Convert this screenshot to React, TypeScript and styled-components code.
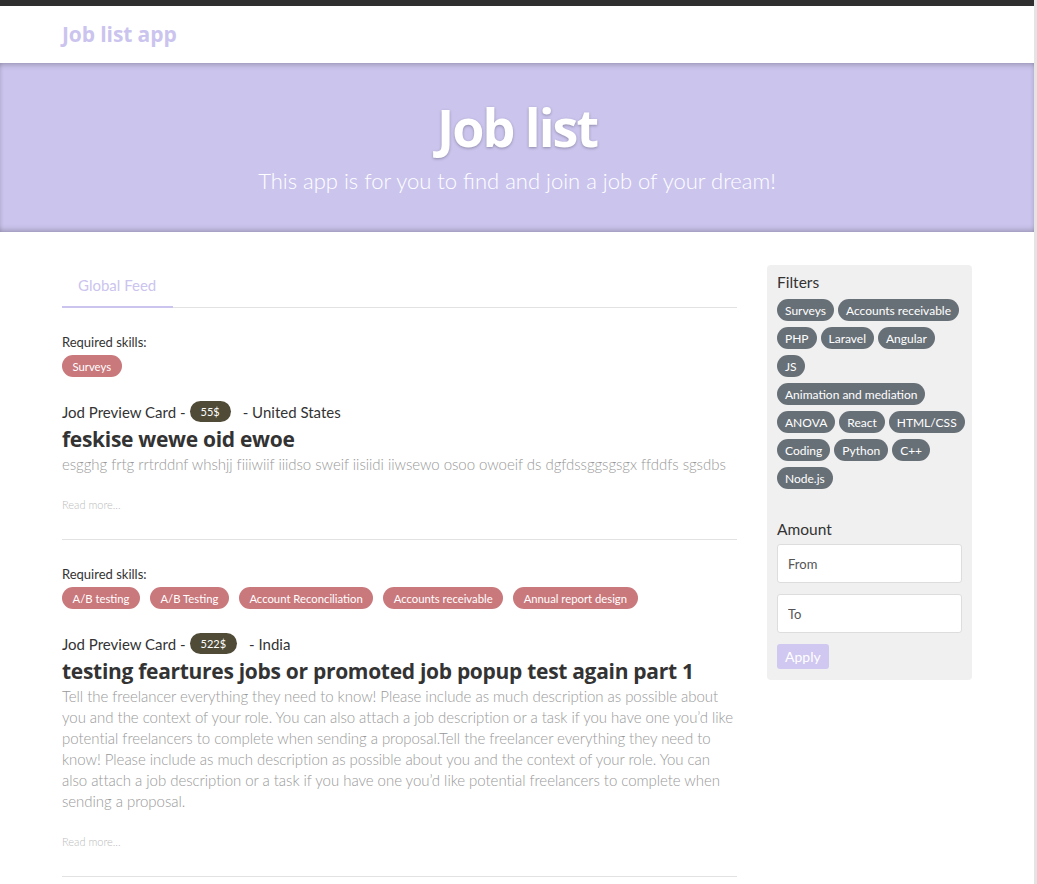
import React from "react";
import styled, { createGlobalStyle } from "styled-components";

const GlobalStyle = createGlobalStyle`
  html, body {
    margin: 0;
    padding: 0;
    background: #fff;
  }
  body {
    font-family: Lato, "Noto Sans", sans-serif;
    color: #373a3c;
  }
  * {
    box-sizing: border-box;
  }
`;

type Job = {
  skills: string[];
  amount: string;
  country: string;
  title: string;
  description: string;
};

const jobs: Job[] = [
  {
    skills: ["Surveys"],
    amount: "55$",
    country: "United States",
    title: "feskise wewe oid ewoe",
    description:
      "esgghg frtg rrtrddnf whshjj fiiiwiif iiidso sweif iisiidi iiwsewo osoo owoeif ds dgfdssggsgsgx ffddfs sgsdbs",
  },
  {
    skills: [
      "A/B testing",
      "A/B Testing",
      "Account Reconciliation",
      "Accounts receivable",
      "Annual report design",
    ],
    amount: "522$",
    country: "India",
    title: "testing feartures jobs or promoted job popup test again part 1",
    description:
      "Tell the freelancer everything they need to know! Please include as much description as possible about you and the context of your role. You can also attach a job description or a task if you have one you\u2019d like potential freelancers to complete when sending a proposal.Tell the freelancer everything they need to know! Please include as much description as possible about you and the context of your role. You can also attach a job description or a task if you have one you\u2019d like potential freelancers to complete when sending a proposal.",
  },
];

// a tag flagged "wrap" starts a new row, like in the original filter box
const filterTags: { name: string; wrap?: boolean }[] = [
  { name: "Surveys" },
  { name: "Accounts receivable" },
  { name: "PHP" },
  { name: "Laravel" },
  { name: "Angular" },
  { name: "JS", wrap: true },
  { name: "Animation and mediation", wrap: true },
  { name: "ANOVA" },
  { name: "React" },
  { name: "HTML/CSS" },
  { name: "Coding" },
  { name: "Python" },
  { name: "C++" },
  { name: "Node.js" },
];

const App = () => {
  return (
    <Page>
      <GlobalStyle />
      <BrowserStrip />
      <Navbar>
        <Brand>Job list app</Brand>
      </Navbar>
      <Banner>
        <BannerTitle>Job list</BannerTitle>
        <BannerText>
          This app is for you to find and join a job of your dream!
        </BannerText>
      </Banner>
      <Content>
        <Main>
          <Tabs>
            <Tab>Global Feed</Tab>
          </Tabs>
          {jobs.map((job) => (
            <Article key={job.title}>
              <SkillsLabel>Required skills:</SkillsLabel>
              <TagList>
                {job.skills.map((s) => (
                  <SkillTag key={s}>{s}</SkillTag>
                ))}
              </TagList>
              <Meta>
                Jod Preview Card -<Amount>{job.amount}</Amount>- {job.country}
              </Meta>
              <Title>{job.title}</Title>
              <Description>{job.description}</Description>
              <ReadMore>Read more...</ReadMore>
            </Article>
          ))}
        </Main>
        <Sidebar>
          <SideHeading>Filters</SideHeading>
          <FilterList>
            {filterTags.map((t) => (
              <React.Fragment key={t.name}>
                {t.wrap && <RowBreak />}
                <FilterTag>{t.name}</FilterTag>
              </React.Fragment>
            ))}
          </FilterList>
          <SideHeading $spaced>Amount</SideHeading>
          <Input placeholder="From" />
          <Input placeholder="To" />
          <ApplyButton>Apply</ApplyButton>
        </Sidebar>
      </Content>
    </Page>
  );
};

export default App;

const Page = styled.div`
  min-height: 884px;
  border-right: 3px solid #e4e4e4;
`;

const BrowserStrip = styled.div`
  height: 6px;
  background: #2f2f2f;
`;

const Navbar = styled.nav`
  height: 57px;
  display: flex;
  align-items: center;
  padding: 0 62px 2px;
  background: #fff;
`;

const Brand = styled.div`
  font-family: "Open Sans", sans-serif;
  font-weight: 700;
  font-size: 21px;
  letter-spacing: -0.1px;
  color: #cbc4ee;
`;

const Banner = styled.header`
  height: 169px;
  background: #cbc5ee;
  box-shadow: inset 0 4px 6px -3px rgba(0, 0, 0, 0.3),
    inset 0 -4px 6px -3px rgba(0, 0, 0, 0.3);
  display: flex;
  flex-direction: column;
  align-items: center;
  padding-top: 30px;
  color: #fff;
`;

const BannerTitle = styled.h1`
  margin: 0;
  font-family: "Open Sans", sans-serif;
  font-weight: 700;
  font-size: 52px;
  letter-spacing: -2px;
  line-height: 68px;
  text-shadow: 0 1px 3px rgba(0, 0, 0, 0.3);
`;

const BannerText = styled.p`
  margin: 6px 0 0;
  font-weight: 300;
  font-size: 22px;
`;

const Content = styled.div`
  display: flex;
  align-items: flex-start;
  gap: 30px;
  padding: 33px 0 0 62px;
`;

const Main = styled.main`
  width: 675px;
  flex-shrink: 0;
`;

const Tabs = styled.div`
  display: flex;
  border-bottom: 1px solid #e2e2e2;
`;

const Tab = styled.div`
  padding: 11px 16px 12px;
  font-size: 15px;
  color: #cbc4ee;
  border-bottom: 2px solid #cbc4ee;
  margin-bottom: -1px;
  width: 111px;
`;

const Article = styled.article`
  padding: 26px 0 28px;
  border-bottom: 1px solid #e2e2e2;
`;

const SkillsLabel = styled.div`
  font-size: 13px;
  color: #333;
  line-height: 16px;
`;

const TagList = styled.div`
  display: flex;
  flex-wrap: wrap;
  gap: 10px;
  margin-top: 5px;
`;

const SkillTag = styled.span`
  display: inline-flex;
  align-items: center;
  height: 22px;
  padding: 0 10.5px;
  border-radius: 11px;
  background: #c9787c;
  color: #fff;
  font-size: 11.3px;
`;

const Meta = styled.div`
  margin-top: 24px;
  display: flex;
  align-items: center;
  font-size: 15px;
  color: #333;
`;

const Amount = styled.span`
  display: inline-flex;
  align-items: center;
  height: 21px;
  padding: 0 11px;
  margin: 0 12px 0 4px;
  border-radius: 11px;
  background: #4f4b37;
  color: #fff;
  font-size: 11px;
`;

const Title = styled.h2`
  margin: 2px 0 0;
  font-family: "Open Sans", sans-serif;
  font-weight: 700;
  font-size: 21px;
  letter-spacing: -0.3px;
  color: #333;
  line-height: 30px;
`;

const Description = styled.p`
  margin: 0;
  font-size: 15px;
  font-weight: 300;
  letter-spacing: -0.04px;
  line-height: 21px;
  color: #999;
`;

const ReadMore = styled.div`
  margin-top: 23px;
  font-size: 11px;
  font-weight: 300;
  color: #bbb;
`;

const Sidebar = styled.aside`
  width: 205px;
  background: #f0f0f0;
  border-radius: 4px;
  padding: 8px 4px 11px 10px;
`;

const SideHeading = styled.div<{ $spaced?: boolean }>`
  font-size: 15.5px;
  color: #333;
  margin-top: ${(p) => (p.$spaced ? "25px" : "0")};
  margin-bottom: ${(p) => (p.$spaced ? "6px" : "8px")};
`;

const FilterList = styled.div`
  display: flex;
  flex-wrap: wrap;
  column-gap: 4px;
`;

const RowBreak = styled.div`
  flex-basis: 100%;
  height: 0;
`;

const FilterTag = styled.span`
  display: inline-flex;
  align-items: center;
  height: 22px;
  margin-bottom: 6px;
  padding: 0 8px;
  border-radius: 11px;
  background: #687077;
  color: #fff;
  font-size: 12px;
`;

const Input = styled.input`
  display: block;
  width: 185px;
  height: 39px;
  margin-bottom: 11px;
  padding: 0 10px;
  border: 1px solid #ddd;
  border-radius: 3px;
  font-family: Lato, sans-serif;
  font-size: 13px;
  color: #333;

  &::placeholder {
    color: #555;
  }
`;

const ApplyButton = styled.button`
  display: flex;
  align-items: center;
  height: 25px;
  margin-top: 1px;
  padding: 0 8px;
  border: none;
  border-radius: 3px;
  background: #d0c8f0;
  color: #fff;
  font-family: Lato, sans-serif;
  font-size: 14px;
`;
